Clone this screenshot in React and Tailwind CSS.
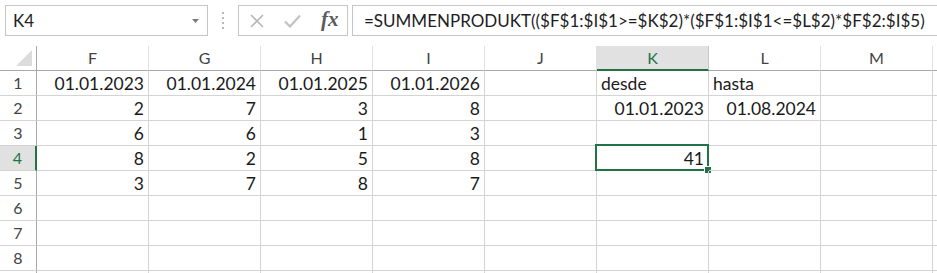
import React from 'react';

const cols = ['F', 'G', 'H', 'I', 'J', 'K', 'L', 'M'];

const data = [
  { F: '01.01.2023', G: '01.01.2024', H: '01.01.2025', I: '01.01.2026', K: 'desde', L: 'hasta' },
  { F: '2', G: '7', H: '3', I: '8', K: '01.01.2023', L: '01.08.2024' },
  { F: '6', G: '6', H: '1', I: '3' },
  { F: '8', G: '2', H: '5', I: '8', K: '41' },
  { F: '3', G: '7', H: '8', I: '7' },
  {},
  {},
  {},
  {},
];

const leftAligned = ['desde', 'hasta'];

function FormulaBar() {
  return (
    <div className="flex items-start h-[36px] pt-[5px] bg-white">
      <div className="ml-[5px] w-[203px] h-[31px] border border-[#c6c6c6] flex items-center justify-between pl-[7px] pr-[8px]">
        <span className="text-[17px] text-[#222]">K4</span>
        <svg width="7" height="4" viewBox="0 0 7 4">
          <path d="M0 0 L7 0 L3.5 4 Z" fill="#7a7a7a" />
        </svg>
      </div>
      <div className="w-[30px] h-[31px] flex flex-col items-center justify-center gap-[3px]">
        <div className="w-[2px] h-[2px] bg-[#b9b9b9]" />
        <div className="w-[2px] h-[2px] bg-[#b9b9b9]" />
        <div className="w-[2px] h-[2px] bg-[#b9b9b9]" />
        <div className="w-[2px] h-[2px] bg-[#b9b9b9]" />
      </div>
      <div className="w-[110px] h-[31px] border border-[#c6c6c6] flex items-center pl-[11px] gap-[20px]">
        <svg width="14" height="14" viewBox="0 0 14 14">
          <path d="M1 1 L13 13 M13 1 L1 13" stroke="#b8b8b8" strokeWidth="1.6" />
        </svg>
        <svg width="17" height="14" viewBox="0 0 17 14">
          <path d="M1 7.5 L6 12.5 L16 1.5" stroke="#c2c2c2" strokeWidth="2.2" fill="none" />
        </svg>
        <span className="font-['Liberation_Serif',serif] italic font-bold text-[21px] text-[#5b5b5b] leading-none -mt-[2px]">
          fx
        </span>
      </div>
      <div className="flex-1 ml-[4px] h-[31px] border border-r-0 border-[#c6c6c6] flex items-center pl-[11px] overflow-hidden whitespace-nowrap">
        <span className="text-[17px] text-[#1e1e1e]">
          =SUMMENPRODUKT(($F$1:$I$1&gt;=$K$2)*($F$1:$I$1&lt;=$L$2)*$F$2:$I$5)
        </span>
      </div>
    </div>
  );
}

function Sheet() {
  return (
    <div className="grid grid-cols-[37px_repeat(8,112px)_1fr]">
      {/* header row */}
      <div className="h-[25px] border-r border-b border-[#a9a9a9] relative overflow-hidden">
        <svg className="absolute right-[4px] bottom-[4px]" width="16" height="16" viewBox="0 0 16 16">
          <path d="M16 0 L16 16 L0 16 Z" fill="#dcdcdc" />
        </svg>
      </div>
      {cols.map((c) => (
        <div
          key={c}
          className={
            c === 'K'
              ? 'h-[25px] bg-[#e1e1e1] border-b-2 border-r border-r-[#c9c9c9] border-b-[#217346] flex items-center justify-center text-[16px] text-[#217346]'
              : 'h-[25px] border-r border-b border-r-[#e0e0e0] border-b-[#a9a9a9] flex items-center justify-center text-[16px] text-[#444]'
          }
        >
          {c}
        </div>
      ))}
      <div className="h-[25px] border-b border-[#a9a9a9]" />

      {data.map((row, i) => (
        <React.Fragment key={i}>
          <div
            className={
              i === 3
                ? 'h-[25px] bg-[#e1e1e1] border-r-2 border-b border-r-[#217346] border-b-[#d4d4d4] flex items-center justify-center text-[16px] text-[#217346]'
                : 'h-[25px] border-r border-b border-r-[#a9a9a9] border-b-[#d4d4d4] flex items-center justify-center text-[16px] text-[#444]'
            }
          >
            {i < 8 ? i + 1 : ''}
          </div>
          {cols.map((c) => {
            const v = row[c];
            const sel = i === 3 && c === 'K';
            return (
              <div
                key={c}
                className={
                  'h-[25px] border-r border-b border-[#d4d4d4] flex items-end pb-[3px] px-[4px] text-[17.5px] leading-none text-[#1a1a1a] relative ' +
                  (v && leftAligned.includes(v) ? 'justify-start' : 'justify-end')
                }
              >
                {v}
                {sel && (
                  <>
                    <div className="absolute -left-[2px] -top-[2px] -right-[1px] -bottom-[1px] border-2 border-[#217346]" />
                    <div className="absolute -right-[3px] -bottom-[3px] w-[6px] h-[6px] bg-[#217346] outline outline-1 outline-white" />
                  </>
                )}
              </div>
            );
          })}
          <div className="h-[25px] border-b border-[#d4d4d4]" />
        </React.Fragment>
      ))}
    </div>
  );
}

export default function App() {
  return (
    <div className="w-[937px] h-[273px] overflow-hidden bg-white font-['Lato',sans-serif]">
      <FormulaBar />
      <div className="h-[10px]" />
      <Sheet />
    </div>
  );
}
